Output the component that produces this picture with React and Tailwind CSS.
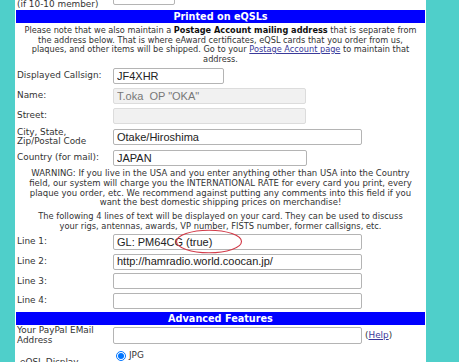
import React from "react";

const font = { fontFamily: "'DejaVu Sans', Verdana, sans-serif" };

const Field = ({ label, value = "", width, disabled, h = "h-[20px]" }) => (
  <div className={`flex items-center ${h}`}>
    <div className="w-[98px] shrink-0 pl-[2px] text-[8.9px] leading-[9.5px] text-[#333]">{label}</div>
    <input
      readOnly
      value={value}
      className={`h-[16px] ${width} rounded-[2px] border px-[3px] text-[11px] outline-none ${
        disabled ? "border-[#dcdcdc] bg-[#f1f1f1] text-[#777]" : "border-[#b4b4b4] bg-white text-[#222]"
      }`}
      style={{ fontFamily: "'Liberation Sans', Arial, sans-serif" }}
    />
  </div>
);

const Bar = ({ children }) => (
  <div className="mx-[1px] h-[13px] bg-[#0000ff] text-center text-[9.7px] font-bold leading-[13px] text-white">
    {children}
  </div>
);

export default function App() {
  return (
    <div className="flex h-[362px] w-[459px] overflow-hidden bg-[#4fcfca]" style={font}>
      <div className="relative ml-[15px] h-full w-[411px] bg-white">
        <div className="mt-[-9px] flex h-[18px] items-start">
          <div className="w-[98px] shrink-0 pl-[2px] pt-[8px] text-[8.9px] leading-[10px] text-[#333]">(if 10-10 member)</div>
          <input readOnly className="h-[14px] w-[62px] rounded-[2px] border border-[#b4b4b4] bg-white" />
        </div>

        <div className="mt-[1px]">
          <Bar>Printed on eQSLs</Bar>
        </div>

        <p className="mt-[3px] text-center text-[8.2px] leading-[9.5px] text-[#333]">
          Please note that we also maintain a <b className="text-[#111]">Postage Account mailing address</b> that is separate from
          <br />
          the address below. That is where eAward certificates, eQSL cards that you order from us,
          <br />
          plaques, and other items will be shipped. Go to your{" "}
          <a className="text-[#3a3a9a] underline">Postage Account page</a> to maintain that
          <br />
          address.
        </p>

        <div className="mt-[2px]">
          <Field label="Displayed Callsign:" value="JF4XHR" width="w-[111px]" />
          <Field label="Name:" value={'T.oka  OP "OKA"'} width="w-[193px]" disabled />
          <Field label="Street:" width="w-[193px]" disabled />
          <Field
            label={
              <>
                City, State,
                <br />
                Zip/Postal Code
              </>
            }
            value="Otake/Hiroshima"
            width="w-[249px]"
            h="h-[22px]"
          />
          <Field label="Country (for mail):" value="JAPAN" width="w-[194px]" />
        </div>

        <p className="mt-[1px] text-center text-[8.5px] leading-[9.8px] text-[#333]">
          WARNING: If you live in the USA and you enter anything other than USA into the Country
          <br />
          field, our system will charge you the INTERNATIONAL RATE for every card you print, every
          <br />
          plaque you order, etc. We recommend against putting any comments into this field if you
          <br />
          want the best domestic shipping prices on merchandise!
        </p>

        <p className="mt-[3px] text-center text-[8.3px] leading-[10px] text-[#333]">
          The following 4 lines of text will be displayed on your card. They can be used to discuss
          <br />
          your rigs, antennas, awards, VP number, FISTS number, former callsigns, etc.
        </p>

        <div className="mt-[1px]">
          <Field label="Line 1:" value="GL: PM64CG (true)" width="w-[249px]" h="h-[19.7px]" />
          <Field label="Line 2:" value="http://hamradio.world.coocan.jp/" width="w-[249px]" h="h-[19.7px]" />
          <Field label="Line 3:" width="w-[249px]" h="h-[19.7px]" />
          <Field label="Line 4:" width="w-[249px]" h="h-[19.7px]" />
        </div>

        <div className="mt-[1px]">
          <Bar>Advanced Features</Bar>
        </div>

        <div className="flex h-[22px] items-center">
          <div className="w-[98px] shrink-0 pl-[2px] text-[8.9px] leading-[9.5px] text-[#333]">
            Your PayPal EMail
            <br />
            Address
          </div>
          <input readOnly className="h-[17px] w-[249px] rounded-[2px] border border-[#b4b4b4] bg-white" />
          <span className="ml-[3px] text-[8.9px] text-[#333]">
            (<a className="text-[#3a3a9a] underline">Help</a>)
          </span>
        </div>

        <div className="flex h-[16px] items-start">
          <div className="w-[98px] shrink-0 pl-[5px] pt-[9px] text-[8.9px] text-[#333]">eQSL Display</div>
          <label className="flex items-center gap-[3px] pl-[3px] pt-[2px] text-[8.9px] text-[#333]">
            <input type="radio" defaultChecked className="m-0 h-[10px] w-[10px] accent-[#0075ff]" />
            JPG
          </label>
        </div>

        <svg className="absolute left-[152px] top-[229px]" width="84" height="26" viewBox="0 0 84 26">
          <ellipse cx="42" cy="12.5" rx="32.5" ry="11.3" fill="none" stroke="#d23a48" strokeWidth="1.1" />
        </svg>
      </div>
    </div>
  );
}
